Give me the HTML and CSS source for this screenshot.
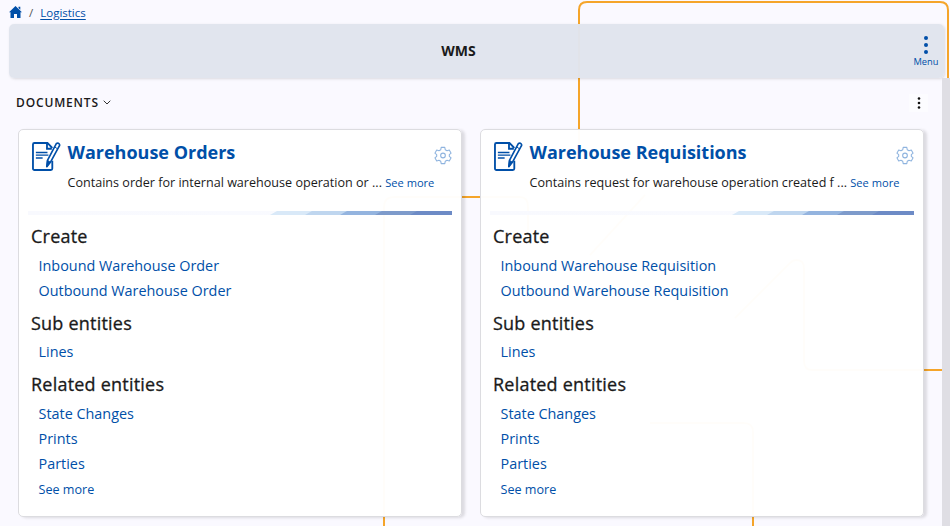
FILE: index.html
```html
<!DOCTYPE html>
<html lang="en">
<head>
<meta charset="utf-8">
<title>WMS</title>
<link rel="stylesheet" href="styles.css">
</head>
<body>
<svg class="symbols" width="0" height="0" aria-hidden="true">
  <symbol id="document" viewBox="0 0 30 30">
    <path d="M21 19.500V27.500a1.500 1.500 0 0 1-1.500 1.500h-17A1.500 1.500 0 0 1 1 27.500V2.500A1.500 1.500 0 0 1 2.500 1H16l5 5.200M15.500 1v6h5" fill="none" stroke="currentColor" stroke-width="1.900"/>
    <path d="M4 10.800h12M4 13.600h13M4 16.500h7" fill="none" stroke="currentColor" stroke-width="1.500"/>
    <path d="M25.300 1.500q1.500-1 2.700.3t0 2.700L19 21l-3.700 4.500L16 19z" fill="#fff" stroke="currentColor" stroke-width="1.700" stroke-linejoin="round"/>
    <path d="M16 19l3 2-3.700 4.500zM23.300 5l3 2" fill="currentColor" stroke="currentColor"/>
  </symbol>
  <symbol id="gear" viewBox="0 0 20 20">
    <path d="M8 1h4l.5 2.600 2 1.200L17 4l2 3.400-2 1.700v1.800l2 1.700-2 3.400-2.500-.8-2 1.200L12 19H8l-.5-2.600-2-1.200L3 16l-2-3.400 2-1.700V9.100L1 7.400 3 4l2.500.8 2-1.200z" stroke-linejoin="round"/>
    <circle cx="10" cy="10" r="2.600"/>
  </symbol>
</svg>
<svg class="backdrop" viewBox="0 0 950 526" aria-hidden="true">
  <path d="M384 526V207q0-10 10-10H520q8 0 8 10V230M579 145V10q0-8 8-8H940q8 0 8 8V90M942 370H812q-8 0-8-9V268q0-8-8-8-3 0-6 3L735 318M753 526V432q0-9-9-9H650M645 195L590 255"/>
</svg>
<nav class="breadcrumb">
  <svg class="home" viewBox="0 0 13 12"><path d="M6.500 0 13 6.200h-1.500V12H8V8H5v4H1.500V6.200H0L6.500 0zM9.500.7h1.800v3L9.500 2z"/></svg>
  <span class="slash">/</span><a>Logistics</a>
</nav>
<header class="titlebar">
  <h1>WMS</h1>
  <button class="menu"><svg viewBox="0 0 4 18"><circle cx="2" cy="2" r="2"/><circle cx="2" cy="9" r="2"/><circle cx="2" cy="16" r="2"/></svg>Menu</button>
</header>
<div class="scrollbar"></div>
<main>
  <div class="section">
    <h2>DOCUMENTS</h2>
    <svg class="chevron" viewBox="0 0 8 5"><path d="M.7.7 4 4 7.300.7"/></svg>
    <button class="more"><svg viewBox="0 0 4 12"><circle cx="2" cy="1.500" r="1.300"/><circle cx="2" cy="6" r="1.300"/><circle cx="2" cy="10.500" r="1.300"/></svg></button>
  </div>
  <div class="cards">
    <article class="card">
      <div class="head">
        <svg class="doc"><use href="#document"/></svg>
        <div class="intro"><h3>Warehouse Orders</h3><p>Contains order for internal warehouse operation or ... <a>See more</a></p></div>
        <svg class="gear"><use href="#gear"/></svg>
      </div>
      <div class="stripe"><i></i><i></i><i></i><i></i><i></i></div>
      <h4>Create</h4>
      <ul><li>Inbound Warehouse Order</li><li>Outbound Warehouse Order</li></ul>
      <h4>Sub entities</h4>
      <ul><li>Lines</li></ul>
      <h4 class="related">Related entities</h4>
      <ul><li>State Changes</li><li>Prints</li><li>Parties</li><li class="small">See more</li></ul>
    </article>
    <article class="card">
      <div class="head">
        <svg class="doc"><use href="#document"/></svg>
        <div class="intro"><h3>Warehouse Requisitions</h3><p>Contains request for warehouse operation created f ... <a>See more</a></p></div>
        <svg class="gear"><use href="#gear"/></svg>
      </div>
      <div class="stripe"><i></i><i></i><i></i><i></i><i></i></div>
      <h4>Create</h4>
      <ul><li>Inbound Warehouse Requisition</li><li>Outbound Warehouse Requisition</li></ul>
      <h4>Sub entities</h4>
      <ul><li>Lines</li></ul>
      <h4 class="related">Related entities</h4>
      <ul><li>State Changes</li><li>Prints</li><li>Parties</li><li class="small">See more</li></ul>
    </article>
  </div>
</main>
</body>
</html>
```
FILE: styles.css
```css
* { box-sizing: border-box; margin: 0; padding: 0; }
body { position: relative; isolation: isolate; width: 950px; height: 526px; overflow: hidden; background: #faf9ff; color: #1a1a1a; font-family: "Open Sans", "Noto Sans", sans-serif; }
button { border: 0; background: none; font: inherit; }
svg { display: block; flex: none; }
.symbols { position: absolute; }
.backdrop { position: absolute; inset: 0; z-index: -1; width: 950px; height: 526px; fill: none; stroke: #f5a52a; stroke-width: 2; }
.breadcrumb { display: flex; align-items: center; height: 24px; padding-left: 9px; font-size: 11.500px; color: #555; }
.home { width: 13px; height: 12px; fill: #004fa8; }
.slash { margin: 0 7px 0 7px; }
.breadcrumb a { color: #004fa8; text-decoration: underline; text-underline-offset: 2px; }
.titlebar { display: flex; align-items: center; justify-content: center; height: 54px; margin: 0 6px 0 9px; background: rgba(224,228,238,.98); border-radius: 5px; box-shadow: 1px 1px 3px rgba(0,0,0,.13); position: relative; }
h1 { font-size: 14px; padding: 0 36px 2px 0; }
.menu { position: absolute; right: 4px; top: 12px; display: flex; flex-direction: column; align-items: center; gap: 1px; width: 28px; color: #004fa8; font-size: 9.300px; line-height: 13px; }
.menu svg { width: 4px; height: 18px; fill: #004fa8; }
.scrollbar { position: absolute; right: 0; top: 78px; width: 8px; height: 448px; background: #dfdee4; }
.section { display: flex; align-items: center; height: 49px; padding: 0 22px 0 16px; }
h2 { font-size: 12px; font-weight: 600; letter-spacing: .85px; }
.chevron { width: 8px; height: 5px; margin-left: 4px; fill: none; stroke: #333; stroke-width: 1; }
.more { display: grid; place-items: center; width: 19px; height: 18px; margin-left: auto; background: #fcfcff; }
.more svg { width: 4px; height: 12px; fill: #111; }
.cards { display: grid; grid-template-columns: 444px 444px; gap: 18px; padding-left: 18px; margin-top: 2px; }
.card { height: 388px; padding: 12px 9px 0 9px; background: rgba(255,255,255,.98); border: 1px solid #dcdce0; border-radius: 5px; box-shadow: 3px 1px 3px rgba(0,0,0,.12); }
.head { display: flex; height: 69px; padding-left: 4px; }
.doc { width: 29px; height: 29px; color: #004fa8; }
.intro { flex: 1; min-width: 0; margin-left: 6.500px; white-space: nowrap; }
h3 { height: 21px; line-height: 21px; font-size: 18px; color: #004fa8; }
.intro p { margin-top: 11px; line-height: 18px; font-size: 12.580px; }
.intro p a { color: #004fa8; font-size: 11.100px; }
.gear { width: 18px; height: 19px; margin-top: 4px; fill: none; stroke: #8fb4df; stroke-width: 1.200; }
.stripe { display: flex; justify-content: flex-end; height: 4px; background: linear-gradient(90deg, #f8f9fe, #fafbff); }
.stripe i { width: 42px; margin-left: -7px; clip-path: polygon(7px 0, 100% 0, 100% 100%, 0 100%); }
.stripe i:nth-child(1) { background: #d9e9f8; }
.stripe i:nth-child(2) { background: #bfd6ef; }
.stripe i:nth-child(3) { background: #94b4df; }
.stripe i:nth-child(4) { background: #7e9bcb; }
.stripe i:nth-child(5) { background: #6d8bc6; }
h4 { height: 24px; margin: 9px 0 5px 3px; line-height: 24px; font-size: 18px; font-weight: 500; letter-spacing: .22px; -webkit-text-stroke: .3px currentColor; }
ul { list-style: none; margin-left: 10.500px; }
ul + h4 { margin-top: 8px; margin-bottom: 4px; }
ul + h4.related { margin-bottom: 5px; }
li { height: 25px; line-height: 25px; font-size: 14.400px; color: #004fa8; }
li.small { padding-top: 1px; font-size: 12.600px; }
```
